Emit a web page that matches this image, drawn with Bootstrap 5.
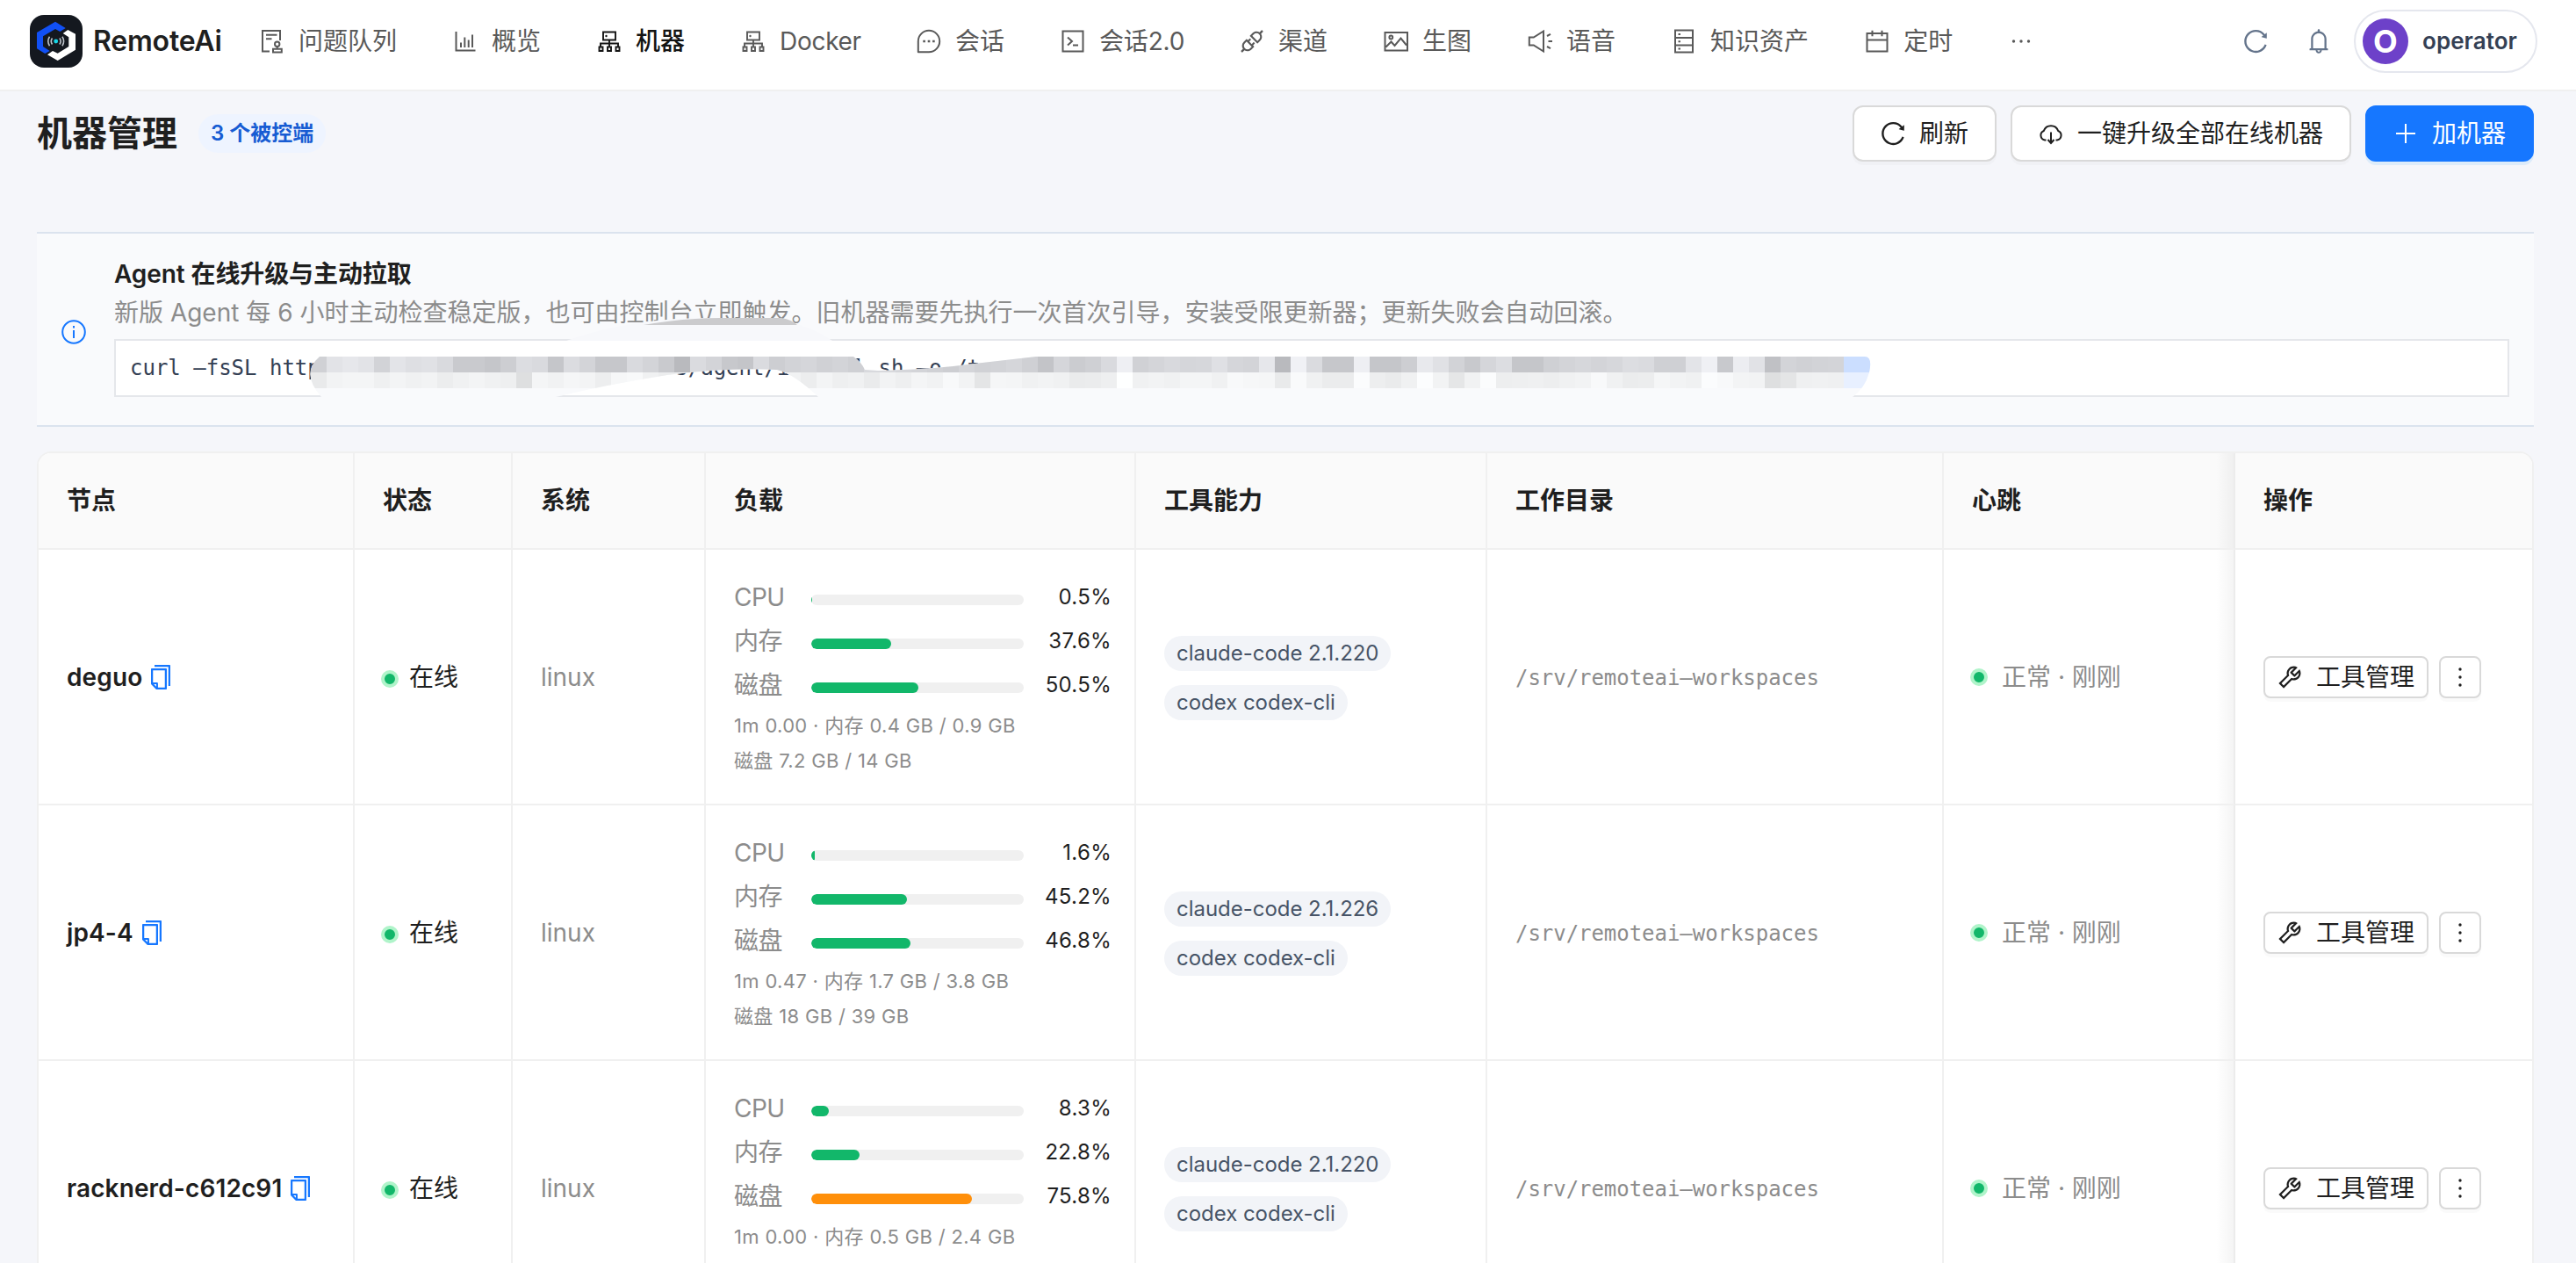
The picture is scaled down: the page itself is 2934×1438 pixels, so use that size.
<!DOCTYPE html>
<html lang="zh-CN">
<head>
<meta charset="utf-8">
<title>RemoteAi - 机器管理</title>
<link href="https://cdn.jsdelivr.net/npm/bootstrap@5.3.0/dist/css/bootstrap.min.css" rel="stylesheet">
<style>
  html, body { height: 100%; overflow: hidden; }
  body { font-family: Inter, "Noto Sans CJK SC", sans-serif; font-size: 28px; line-height: 44px; color: #1f1f1f; background: #f5f6fa; }
  svg { display: block; flex: none; }
  .ico { width: 28px; height: 28px; fill: currentColor; }
  .ico-line { fill: none; stroke: currentColor; stroke-width: 2; }
  .topbar { height: 104px; background: #fff; border-bottom: 2px solid #f0f0f0; padding: 0 44px 0 34px; }
  .topbar .brand-link { height: 94px; }
  .topbar .brand-name { font-size: 32px; font-weight: 600; margin-left: 12px; width: 190px; letter-spacing: -.2px; }
  .topbar .navbar-nav { gap: 64px; height: 94px; }
  .topbar .nav-link { padding: 0; color: #595959; display: flex; align-items: center; gap: 16px; white-space: nowrap; }
  .topbar .nav-link.active { color: #141414; font-weight: 500; }
  .w-docker { width: 136px; letter-spacing: -.3px; }
  .w-v2 { width: 140px; letter-spacing: -.2px; }
  .tools { color: #64748b; height: 94px; }
  .bell { margin: 0 26px 0 44px; }
  .user-pill { width: 209px; height: 72px; border: 2px solid #e5e7ee; border-radius: 36px; padding-left: 8px; color: #344054; font-weight: 600; font-size: 26px; gap: 16px; letter-spacing: .05px; }
  .avatar { width: 52px; height: 52px; border-radius: 50%; background: #6d41c9; color: #fff; font-weight: 700; font-size: 36px; }
  .page { padding: 16px 48px 0 42px; }
  .title { font-size: 40px; font-weight: 700; line-height: 64px; }
  .count { height: 44px; border-radius: 22px; background: #eef4ff; color: #175cd3; font-size: 24px; font-weight: 600; padding: 0 14px; margin-left: 24px; line-height: 44px; }
  .act { height: 64px; border-radius: 12px; border: 2px solid #d9d9d9; background: #fff; font-size: 28px; padding: 0 30px; gap: 16px; box-shadow: 0 4px 0 rgba(0,0,0,.02); color: #1f1f1f; white-space: nowrap; }
  .act-main { background: #1677ff; border-color: #1677ff; color: #fff; box-shadow: 0 4px 0 rgba(5,145,255,.1); }
  .notice { margin-top: 80px; height: 222px; border: solid #dbe3ee; border-width: 2px 0; background: #f9fafc; padding: 24px 28px 0; gap: 32px; }
  .notice-icon { color: #1677ff; margin-top: 74px; }
  .notice-title { font-weight: 600; letter-spacing: -.1px; }
  .notice-text { color: #8c8c8c; white-space: nowrap; }
  .cmd { height: 66px; margin-top: 8px; border: 2px solid #e5e7eb; background: #fff; font: 24px/62px "DejaVu Sans Mono", monospace; color: #344054; padding-left: 16px; white-space: pre; }
  .redact { position: absolute; left: -2px; top: -48px; width: 2020px; height: 120px; }
  .grid { width: 2844px; margin-top: 28px; table-layout: fixed; border-collapse: separate; border-spacing: 0; background: #fff; border: 2px solid #f0f0f0; border-radius: 16px 16px 0 0; overflow: hidden; }
  .grid th { height: 110px; background: #fafafa; font-weight: 600; padding: 0 32px; border-bottom: 2px solid #f0f0f0; border-right: 2px solid #f0f0f0; vertical-align: middle; }
  .grid td { height: 291px; padding: 0 32px; border-bottom: 2px solid #f0f0f0; border-right: 2px solid #f0f0f0; vertical-align: middle; white-space: nowrap; }
  .grid td.load { padding-top: 3px; }
  .grid td.caps { padding-top: 2px; }
  .grid tr > :last-child { border-right: 0; }
  .grid tr > :nth-child(7) { border-right-color: #ececec; background-image: linear-gradient(to right, rgba(5,5,5,0), rgba(5,5,5,.045)); background-repeat: no-repeat; background-size: 20px 100%; background-position: right; }
  .node { font-weight: 600; gap: 7px; letter-spacing: .12px; }
  .node svg { color: #1677ff; }
  .state { gap: 12px; margin-left: -2px; }
  .beat { gap: 16px; margin-left: -2px; }
  .lamp { width: 20px; height: 20px; border-radius: 50%; border: 4px solid #b0f4ca; background: #12b76a; flex: none; }
  .dim { color: #8c8c8c; }
  .path { font: 24px/44px "DejaVu Sans Mono", monospace; letter-spacing: -.04px; color: #8c8c8c; }
  .meter { height: 44px; margin-bottom: 6px; width: 430px; }
  .meter-label { width: 88px; color: #8c8c8c; letter-spacing: -.5px; }
  .meter .progress { width: 242px; height: 12px; margin-top: 6px; border-radius: 6px; background: #f0f0f0; }
  .meter .progress-bar { background: #12b76a; border-radius: 6px; }
  .meter .progress-bar.warm { background: #ff8f0a; }
  .meter-value { width: 100px; text-align: right; font-size: 24px; letter-spacing: .3px; }
  .usage { font-size: 22px; line-height: 40px; color: #8c8c8c; letter-spacing: .33px; }
  .tool-tag { height: 40px; line-height: 40px; border-radius: 20px; background: #f2f4f8; color: #475467; font-size: 24px; padding: 0 14px; letter-spacing: -.03px; }
  .ops { gap: 12px; }
  .op { height: 48px; border: 2px solid #d9d9d9; border-radius: 8px; background: #fff; box-shadow: 0 4px 0 rgba(0,0,0,.02); padding: 0 14px; gap: 16px; font-size: 28px; color: #1f1f1f; }
  .op-more { width: 48px; padding: 0; }
</style>
<script src="https://cdn.jsdelivr.net/npm/bootstrap@5.3.0/dist/js/bootstrap.bundle.min.js"></script>
</head>
<body>
<svg width="0" height="0" class="position-absolute">
  <symbol id="reload" viewBox="64 64 896 896"><path d="M909.1 209.3l-56.4 44.1C775.8 155.1 656.2 92 521.9 92 290 92 102.3 279.5 102 511.5 101.7 743.7 289.8 932 521.9 932c181.3 0 335.8-115 394.6-276.1 1.5-4.2-.7-8.9-4.9-10.3l-56.7-19.5a8 8 0 00-10.1 4.8c-1.8 5-3.8 10-5.9 14.9-17.3 41-42.1 77.8-73.7 109.4A344.77 344.77 0 01655.9 829c-42.3 17.9-87.4 27-133.8 27-46.5 0-91.5-9.1-133.8-27A341.5 341.5 0 01279 755.2a342.16 342.16 0 01-73.7-109.4c-17.9-42.4-27-87.4-27-133.9s9.1-91.5 27-133.9c17.3-41 42.1-77.8 73.7-109.4 31.6-31.6 68.4-56.4 109.3-73.8 42.3-17.9 87.4-27 133.8-27 46.5 0 91.5 9.1 133.8 27a341.5 341.5 0 01109.3 73.8c9.9 9.9 19.2 20.4 27.8 31.4l-60.2 47a8 8 0 003 14.1l175.6 43c5 1.2 9.9-2.6 9.9-7.7l.8-180.9c-.1-6.6-7.8-10.3-13-6.2z"/></symbol>
  <symbol id="copy" viewBox="64 64 896 896"><path d="M832 64H296c-4.4 0-8 3.6-8 8v56c0 4.4 3.6 8 8 8h496v688c0 4.4 3.6 8 8 8h56c4.4 0 8-3.6 8-8V96c0-17.7-14.3-32-32-32zM704 192H192c-17.7 0-32 14.3-32 32v530.7c0 8.5 3.4 16.6 9.4 22.6l173.3 173.3c2.2 2.2 4.7 4 7.4 5.5v1.9h4.2c3.5 1.3 7.2 2 11 2H704c17.7 0 32-14.3 32-32V224c0-17.7-14.3-32-32-32zM350 856.2L263.9 770H350v86.2zM664 888H414V746c0-22.1-17.9-40-40-40H232V264h432v624z"/></symbol>
  <symbol id="tool" viewBox="64 64 896 896"><path d="M876.6 239.5c-.5-.9-1.2-1.8-2-2.5-5-5-13.1-5-18.1 0L684.2 409.3l-67.9-67.9L788.7 169c.8-.8 1.4-1.6 2-2.5 3.6-6.1 1.6-13.9-4.5-17.5-98.2-58-226.8-44.7-311.3 39.7-67 67-89.2 162-66.5 247.4l-293 293c-3 3-2.8 7.9.3 11l169.7 169.7c3.1 3.1 8.1 3.3 11 .3l292.9-292.9c85.5 22.8 180.5.7 247.6-66.4 84.4-84.5 97.7-213.1 39.7-311.3zM786 499.8c-58.1 58.1-145.3 69.3-214.6 33.6l-8.8 8.8-.1-.1-274 274.1-79.2-79.2 230.1-230.1s0 .1.1.1l52.8-52.8c-35.7-69.3-24.5-156.5 33.6-214.6a184.2 184.2 0 01144-53.5L537 318.9a32.05 32.05 0 000 45.3l124.5 124.5a32.05 32.05 0 0045.3 0l132.8-132.8c3.7 51.8-14.4 104.8-53.6 143.9z"/></symbol>
  <symbol id="more" viewBox="0 0 28 28"><circle cx="14" cy="5" r="1.7"/><circle cx="14" cy="14" r="1.7"/><circle cx="14" cy="23" r="1.7"/></symbol>
  <symbol id="cluster" viewBox="0 0 28 28"><path d="M7 3.500h14v9H7zM14 12.500v7M4 20v-3.500h20V20M2.500 20.500h4V25h-4zM12 20.500h4V25h-4zM21.500 20.500h4V25h-4z" fill="none" stroke="currentColor" stroke-width="1.900"/><circle cx="10.500" cy="8" r="1.200"/></symbol>
</svg>

<header class="topbar d-flex align-items-start">
  <a class="brand-link d-flex align-items-center text-reset text-decoration-none" href="#">
    <svg width="60" height="60" viewBox="0 0 60 60"><rect width="60" height="60" rx="16" fill="#14181f"/><path d="M29 7.700 40.700 15 34.300 19 29 16 15 24.300V36l7.700 5-5.500 3L8 38.300V20z" fill="#1150f5"/><path d="M43.300 17 52 21.700v18L31.700 52 20 45.300 26 41l5.700 2.700L44.300 36V25.300L37.700 21z" fill="#fff"/><circle cx="29.700" cy="30" r="2.400" fill="#17d5e6"/><path d="M25.500 26.500a6 6 0 0 0 0 7M33.900 26.500a6 6 0 0 1 0 7M22.500 24.800a9.500 9.500 0 0 0 0 10.400M36.900 24.800a9.500 9.500 0 0 1 0 10.400" fill="none" stroke="#bcc2c9" stroke-width="1.600"/></svg>
    <span class="brand-name">RemoteAi</span>
  </a>
  <nav class="navbar-nav flex-row align-items-center">
    <a class="nav-link" href="#"><svg class="ico ico-line" viewBox="0 0 28 28"><path d="M23 13V2H3v23.500h8M7 6.800h12.500M7 11.300h6.500M19.700 20v3M15 22.800h9.800v3.700H15z"/><circle cx="19.700" cy="17.200" r="2.700"/></svg>问题队列</a>
    <a class="nav-link" href="#"><svg class="ico ico-line" viewBox="0 0 28 28"><path d="M3.500 3v21.500h22M9 15.500V21M13.300 9.500V21M17.700 12.500V21M22 6.500V21"/></svg>概览</a>
    <a class="nav-link active" href="#"><svg class="ico"><use href="#cluster"/></svg>机器</a>
    <a class="nav-link w-docker" href="#"><svg class="ico"><use href="#cluster"/></svg>Docker</a>
    <a class="nav-link" href="#"><svg class="ico ico-line" viewBox="0 0 28 28"><path d="M1.800 26.200V14A12.200 12.200 0 1 1 14 26.200z" stroke-linejoin="round"/><path d="M7.300 14h2.600M12.700 14h2.600M18.100 14h2.600" stroke-width="2.600"/></svg>会话</a>
    <a class="nav-link w-v2" href="#"><svg class="ico ico-line" viewBox="0 0 28 28"><path d="M2.500 2.500h23v23h-23zM8 9.500l5 4.500-5 4.500M14 18.500h6"/></svg>会话2.0</a>
    <a class="nav-link" href="#"><svg class="ico" viewBox="64 64 896 896"><path d="M917.7 148.8l-42.4-42.4c-1.6-1.6-3.6-2.300-5.700-2.300s-4.100.8-5.700 2.300l-76.100 76.100a199.270 199.270 0 00-112.100-34.300c-51.200 0-102.400 19.500-141.500 58.600L432.300 308.700a8.030 8.030 0 000 11.300L704 591.700c1.600 1.600 3.600 2.300 5.700 2.300 2 0 4.100-.8 5.700-2.300l101.900-101.900c68.900-69 77-175.700 24.300-253.500l76.100-76.100c3.100-3.200 3.100-8.300 0-11.400zM769.100 441.700l-59.400 59.400-186.800-186.800 59.400-59.400c24.900-24.900 58.100-38.700 93.400-38.700 35.300 0 68.400 13.700 93.400 38.700 24.900 24.900 38.700 58.100 38.700 93.400 0 35.300-13.800 68.400-38.700 93.400zm-190.200 105a8.030 8.030 0 00-11.300 0L501 613.300 410.700 523l66.700-66.700c3.100-3.100 3.100-8.200 0-11.300L441 408.600a8.030 8.030 0 00-11.300 0L363 475.300l-43-43a7.850 7.850 0 00-5.700-2.300c-2 0-4.100.8-5.700 2.300L206.800 534.200c-68.900 69-77 175.700-24.300 253.500l-76.100 76.100a8.030 8.030 0 000 11.300l42.400 42.400c1.600 1.600 3.600 2.300 5.700 2.300s4.100-.8 5.700-2.300l76.100-76.100c33.700 22.900 72.900 34.300 112.100 34.300 51.200 0 102.400-19.500 141.500-58.600l101.900-101.900c3.100-3.100 3.100-8.200 0-11.300l-43-43 66.700-66.700c3.100-3.100 3.100-8.200 0-11.300l-36.600-36.200zM441.700 769.100a131.320 131.320 0 01-93.400 38.700c-35.300 0-68.400-13.700-93.400-38.700a131.320 131.320 0 01-38.700-93.400c0-35.300 13.700-68.400 38.700-93.400l59.400-59.400 186.800 186.800-59.400 59.400z"/></svg>渠道</a>
    <a class="nav-link" href="#"><svg class="ico ico-line" viewBox="0 0 28 28"><path d="M1.500 4h25.500v20.500H1.500zM2.500 20.500l6-6 4 4.500 7-8.500 6.500 8"/><circle cx="8.300" cy="9.500" r="1.900"/></svg>生图</a>
    <a class="nav-link" href="#"><svg class="ico ico-line" viewBox="0 0 28 28"><path d="M1.800 9.500h5l11.200-7v23l-11.200-7h-5zM22 8l4-2.200M23.500 14H28M22 20l4 2.200"/></svg>语音</a>
    <a class="nav-link" href="#"><svg class="ico ico-line" viewBox="0 0 28 28"><path d="M4 1.500h20v25H4zM4 10h20M4 18.500h20M7.500 6H10M7.500 14.200H10M7.500 22.500H10"/></svg>知识资产</a>
    <a class="nav-link" href="#"><svg class="ico ico-line" viewBox="0 0 28 28"><path d="M2.500 5h23v20.500h-23zM2.500 12.500h23M8.500 1.800v6.500M19.500 1.800v6.500"/></svg>定时</a>
    <a class="nav-link" href="#"><svg class="ico" viewBox="0 0 28 28"><circle cx="5.500" cy="14" r="1.700"/><circle cx="14" cy="14" r="1.700"/><circle cx="22.500" cy="14" r="1.700"/></svg></a>
  </nav>
  <div class="tools d-flex align-items-center ms-auto">
    <svg class="ico"><use href="#reload"/></svg>
    <svg class="ico bell" viewBox="64 64 896 896"><path d="M816 768h-24V428c0-141.100-104.300-257.700-240-277.100V112c0-22.100-17.900-40-40-40s-40 17.900-40 40v38.900c-135.700 19.400-240 136-240 277.100v340h-24c-17.700 0-32 14.300-32 32v32c0 4.400 3.600 8 8 8h216c0 61.800 50.200 112 112 112s112-50.200 112-112h216c4.400 0 8-3.600 8-8v-32c0-17.700-14.300-32-32-32zM512 888c-26.500 0-48-21.500-48-48h96c0 26.500-21.500 48-48 48zM304 768V428c0-55.600 21.600-107.800 60.900-147.100S456.400 220 512 220c55.600 0 107.800 21.600 147.100 60.900S720 372.400 720 428v340H304z"/></svg>
    <div class="user-pill d-flex align-items-center"><span class="avatar d-flex align-items-center justify-content-center">O</span>operator</div>
  </div>
</header>

<main class="page">
  <div class="d-flex align-items-center">
    <h1 class="title m-0">机器管理</h1>
    <span class="count">3 个被控端</span>
    <div class="d-flex ms-auto gap-3">
      <button class="act d-flex align-items-center"><svg class="ico"><use href="#reload"/></svg>刷新</button>
      <button class="act d-flex align-items-center"><svg class="ico ico-line" viewBox="0 0 28 28"><path d="M8.500 21.500H7A5.500 5.500 0 0 1 5.800 11 8.700 8.700 0 0 1 22.200 11 5.500 5.500 0 0 1 21 21.500h-1.500M14 12.500V24M10.500 21l3.500 4 3.500-4"/></svg>一键升级全部在线机器</button>
      <button class="act act-main d-flex align-items-center"><svg class="ico ico-line" viewBox="0 0 28 28"><path d="M14 3v22M3 14h22"/></svg>加机器</button>
    </div>
  </div>

  <section class="notice d-flex align-items-start">
    <svg class="ico ico-line notice-icon" viewBox="0 0 28 28"><circle cx="14" cy="14" r="12.800"/><path d="M14 12v9M14 7v2.600"/></svg>
    <div class="flex-grow-1">
      <div class="notice-title">Agent 在线升级与主动拉取</div>
      <div class="notice-text">新版 Agent 每 6 小时主动检查稳定版，也可由控制台立即触发。旧机器需要先执行一次首次引导，安装受限更新器；更新失败会自动回滚。</div>
      <div class="cmd position-relative">curl –fsSL http                            s/agent/i     l sh –o /tm<svg class="redact" viewBox="130 340 2020 120"><defs><clipPath id="smear"><path d="M364 406H972Q981 412 985 421L1000 422Q1060 421 1110 414L1180 406H2124Q2133 406 2129 424Q2124 442 2110 452H932Q905 426 885 421Q830 418 760 427Q690 438 633 452H366Q342 425 364 406Z"/></clipPath></defs><path d="M645 388Q700 368 770 363Q830 360 895 366Q925 372 948 388z" fill="#f7f8fb"/><path d="M733 370Q780 362 820 362H890Q902 364 908 370z" fill="#cbcbcd"/><g id="cells" clip-path="url(#smear)"><rect x="340" y="406" width="1800" height="47" fill="#f9fafc"/></g></svg></div>
    </div>
  </section>

  <table class="grid">
    <colgroup><col style="width:360px"><col style="width:180px"><col style="width:220px"><col style="width:490px"><col style="width:400px"><col style="width:520px"><col style="width:332px"><col style="width:338px"></colgroup>
    <thead><tr><th>节点</th><th>状态</th><th>系统</th><th>负载</th><th>工具能力</th><th>工作目录</th><th>心跳</th><th>操作</th></tr></thead>
    <tbody>
      <tr>
        <td><div class="node d-flex align-items-center">deguo<svg class="ico"><use href="#copy"/></svg></div></td>
        <td><div class="state d-flex align-items-center"><span class="lamp mt-1"></span>在线</div></td>
        <td class="dim">linux</td>
        <td class="load">
          <div class="meter d-flex align-items-center"><span class="meter-label">CPU</span><div class="progress"><div class="progress-bar" style="width:.5%"></div></div><span class="meter-value">0.5%</span></div>
          <div class="meter d-flex align-items-center"><span class="meter-label">内存</span><div class="progress"><div class="progress-bar" style="width:37.6%"></div></div><span class="meter-value">37.6%</span></div>
          <div class="meter d-flex align-items-center mb-1"><span class="meter-label">磁盘</span><div class="progress"><div class="progress-bar" style="width:50.5%"></div></div><span class="meter-value">50.5%</span></div>
          <div class="usage">1m 0.00 · 内存 0.4 GB / 0.9 GB</div><div class="usage">磁盘 7.2 GB / 14 GB</div>
        </td>
        <td class="caps"><div class="d-flex flex-column align-items-start gap-3"><span class="tool-tag">claude-code 2.1.220</span><span class="tool-tag">codex codex-cli</span></div></td>
        <td><span class="path">/srv/remoteai–workspaces</span></td>
        <td><div class="beat dim d-flex align-items-center"><span class="lamp"></span>正常 · 刚刚</div></td>
        <td><div class="ops d-flex"><button class="op d-flex align-items-center"><svg class="ico"><use href="#tool"/></svg>工具管理</button><button class="op op-more d-flex align-items-center justify-content-center"><svg class="ico"><use href="#more"/></svg></button></div></td>
      </tr>
      <tr>
        <td><div class="node d-flex align-items-center">jp4-4<svg class="ico"><use href="#copy"/></svg></div></td>
        <td><div class="state d-flex align-items-center"><span class="lamp mt-1"></span>在线</div></td>
        <td class="dim">linux</td>
        <td class="load">
          <div class="meter d-flex align-items-center"><span class="meter-label">CPU</span><div class="progress"><div class="progress-bar" style="width:1.6%"></div></div><span class="meter-value">1.6%</span></div>
          <div class="meter d-flex align-items-center"><span class="meter-label">内存</span><div class="progress"><div class="progress-bar" style="width:45.2%"></div></div><span class="meter-value">45.2%</span></div>
          <div class="meter d-flex align-items-center mb-1"><span class="meter-label">磁盘</span><div class="progress"><div class="progress-bar" style="width:46.8%"></div></div><span class="meter-value">46.8%</span></div>
          <div class="usage">1m 0.47 · 内存 1.7 GB / 3.8 GB</div><div class="usage">磁盘 18 GB / 39 GB</div>
        </td>
        <td class="caps"><div class="d-flex flex-column align-items-start gap-3"><span class="tool-tag">claude-code 2.1.226</span><span class="tool-tag">codex codex-cli</span></div></td>
        <td><span class="path">/srv/remoteai–workspaces</span></td>
        <td><div class="beat dim d-flex align-items-center"><span class="lamp"></span>正常 · 刚刚</div></td>
        <td><div class="ops d-flex"><button class="op d-flex align-items-center"><svg class="ico"><use href="#tool"/></svg>工具管理</button><button class="op op-more d-flex align-items-center justify-content-center"><svg class="ico"><use href="#more"/></svg></button></div></td>
      </tr>
      <tr>
        <td><div class="node d-flex align-items-center">racknerd-c612c91<svg class="ico"><use href="#copy"/></svg></div></td>
        <td><div class="state d-flex align-items-center"><span class="lamp mt-1"></span>在线</div></td>
        <td class="dim">linux</td>
        <td class="load">
          <div class="meter d-flex align-items-center"><span class="meter-label">CPU</span><div class="progress"><div class="progress-bar" style="width:8.3%"></div></div><span class="meter-value">8.3%</span></div>
          <div class="meter d-flex align-items-center"><span class="meter-label">内存</span><div class="progress"><div class="progress-bar" style="width:22.8%"></div></div><span class="meter-value">22.8%</span></div>
          <div class="meter d-flex align-items-center mb-1"><span class="meter-label">磁盘</span><div class="progress"><div class="progress-bar warm" style="width:75.8%"></div></div><span class="meter-value">75.8%</span></div>
          <div class="usage">1m 0.00 · 内存 0.5 GB / 2.4 GB</div><div class="usage">&nbsp;</div>
        </td>
        <td class="caps"><div class="d-flex flex-column align-items-start gap-3"><span class="tool-tag">claude-code 2.1.220</span><span class="tool-tag">codex codex-cli</span></div></td>
        <td><span class="path">/srv/remoteai–workspaces</span></td>
        <td><div class="beat dim d-flex align-items-center"><span class="lamp"></span>正常 · 刚刚</div></td>
        <td><div class="ops d-flex"><button class="op d-flex align-items-center"><svg class="ico"><use href="#tool"/></svg>工具管理</button><button class="op op-more d-flex align-items-center justify-content-center"><svg class="ico"><use href="#more"/></svg></button></div></td>
      </tr>
    </tbody>
  </table>
</main>
<script>
  // Grey levels of the two rows of 18px blocks that hide the address in the command.
  const upper = "d0e2e6e2d2e3dee0d9c9" + "c9c5cddcd9c5dbd3c6c6" + "d9d3c9b9dad3c7c4dacd" + "d2d5d0d3cfd8d8d5d3d0" + "cdd4d0d2d5cfc3d5cbcf" +
    "d9eed0d4d8d5d6dfd5d3" + "e6b9f0dac6c6eec5c5cd" + "e8e0d2c8d5dcc5c5cfd3" + "d6d3d6dcdacfcfe3efc8" + "ece1c0d3d0d2d3";
  const lower = "e9f2f4f4eff3f0f2ecf0" + "f3f0eedef4f1f5f3edf6" + "f8f0eceeeaf2eff4f0ed" + "f1ecf3eef0eaf2eef4f1" + "f8f2e4f5f4f0f2f0eaeb" +
    "eefef0f2f0f4f4f0f8f6" + "f5e9f9f0ebebfbedeaf0" + "fcf2e5f1fbedeeefedf0" + "f2f8f0ebecf5f2f0fbf8" + "f3f2dee4eff0ef";
  const group = document.getElementById("cells");
  [upper, lower].forEach((row, r) => {
    for (let i = 0; i < 99; i++) {
      const v = parseInt(row.slice(i * 2, i * 2 + 2), 16);
      const c = document.createElementNS("http://www.w3.org/2000/svg", "rect");
      c.setAttribute("x", i ? 354 + i * 18 : 345);
      c.setAttribute("y", 406 + r * 18);
      c.setAttribute("width", i ? 18 : 27);
      c.setAttribute("height", 18);
      c.setAttribute("shape-rendering", "crispEdges");
      c.setAttribute("fill", i > 96 ? (r ? "#e8f0ff" : "#cbdeff") : `rgb(${v},${Math.min(255, v + 1)},${Math.min(255, v + (r ? 2 : 5))})`);
      group.appendChild(c);
    }
  });
</script>
</body>
</html>
